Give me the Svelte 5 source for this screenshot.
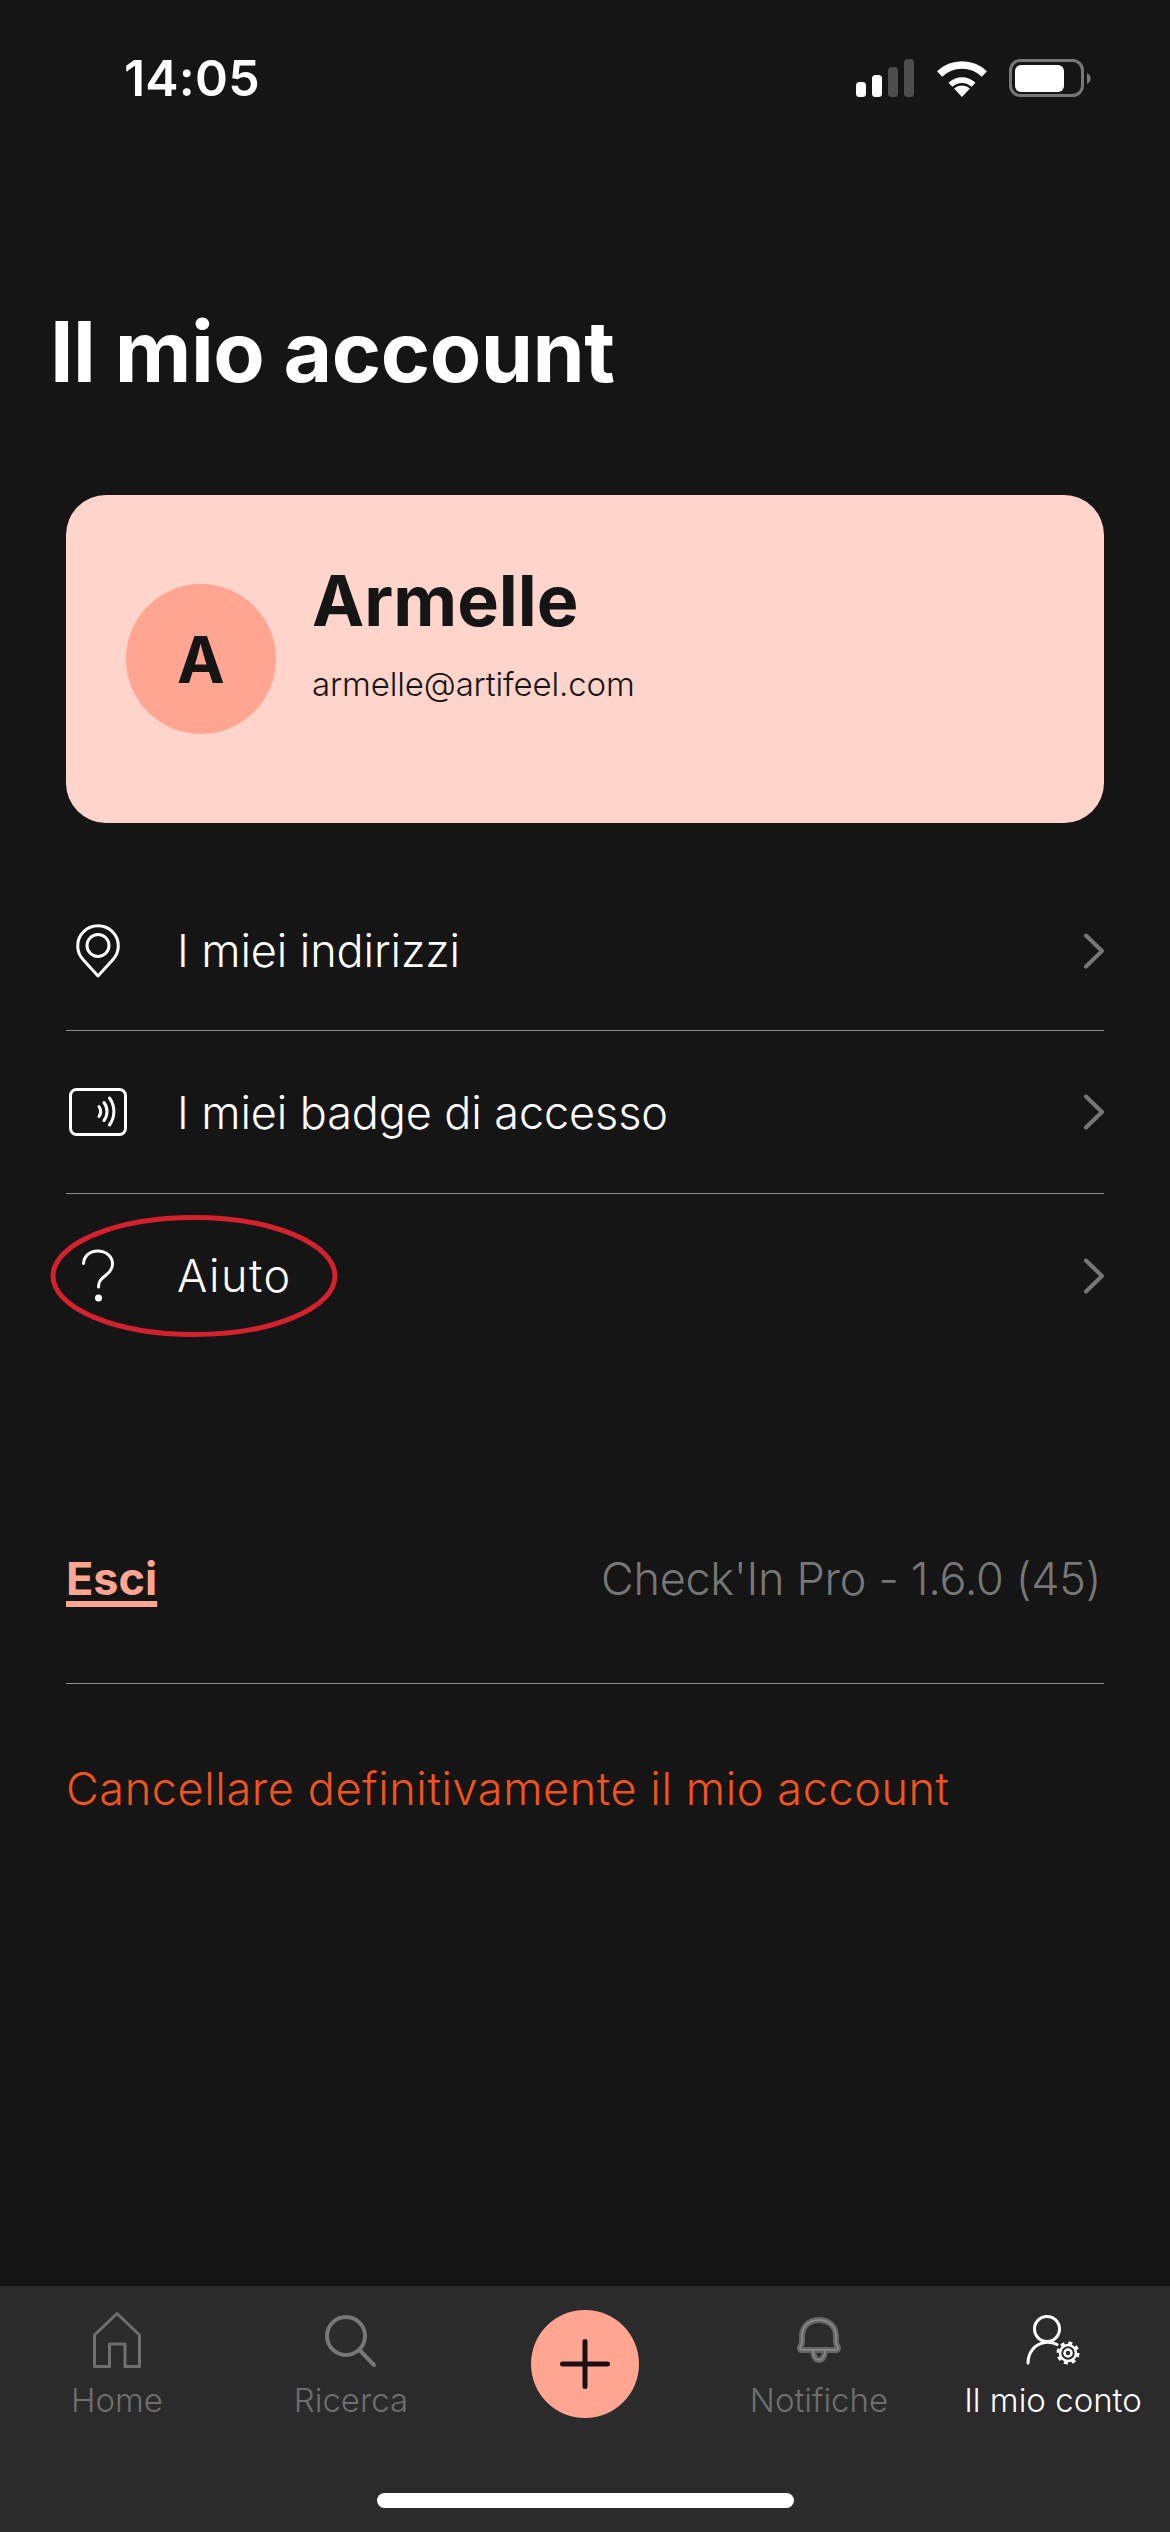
<script>
	const rows = [
		{ label: 'I miei indirizzi', icon: 'pin' },
		{ label: 'I miei badge di accesso', icon: 'badge' },
		{ label: 'Aiuto', icon: 'help' }
	];
	const bell =
		'M25 9C14 9 8 16 8 26V31C8 34 6 35 6 37C6 38.500 7 39 8 39H42C43 39 44 38.500 44 37C44 35 42 34 42 31V26C42 16 36 9 25 9ZM19 39C19 46 22 49 25 49C28 49 31 46 31 39';
</script>

<div class="page">
	<div class="status">
		<span class="time">14:05</span>
		<div class="status-icons">
			<svg class="signal" width="58" height="38" viewBox="0 0 58 38">
				<rect x="0" y="23" width="10" height="15" rx="3.500" fill="#fff" />
				<rect x="16" y="16" width="10" height="22" rx="3.500" fill="#fff" />
				<rect x="32" y="8" width="10" height="30" rx="3.500" fill="#4d4d4d" />
				<rect x="48" y="0" width="10" height="38" rx="3.500" fill="#4d4d4d" />
			</svg>
			<svg class="wifi" width="50" height="38" viewBox="0 0 50 38">
				<path d="M25 38 17 29.500a12 12 0 0 1 16 0z" fill="#fff" />
				<path d="M11.500 23.800a19.500 19.500 0 0 1 27 0L34.600 27.800a14 14 0 0 0-19.200 0z" fill="#fff" />
				<path d="M0 12.300a36 36 0 0 1 50 0L44.800 17.800a28.500 28.500 0 0 0-39.600 0z" fill="#fff" />
			</svg>
			<svg class="battery" width="82" height="38" viewBox="0 0 82 38">
				<rect x="1.500" y="1.500" width="72" height="35" rx="10" fill="none" stroke="#777" stroke-width="3" />
				<rect x="6" y="6" width="49" height="27" rx="6" fill="#fff" />
				<path d="M78 14a6 6 0 0 1 0 11z" fill="#777" />
			</svg>
		</div>
	</div>

	<h1 class="title">Il mio account</h1>

	<div class="card">
		<div class="avatar">A</div>
		<div class="who">
			<div class="name">Armelle</div>
			<div class="email">armelle@artifeel.com</div>
		</div>
	</div>

	<div class="rows">
		{#each rows as row}
			<div class="row">
				<span class="row-icon">
					{#if row.icon === 'pin'}
						<svg width="44" height="54" viewBox="0 0 44 54" fill="none" stroke="#fff" stroke-width="3">
							<path d="M22 52 7 35.500C3.500 31.500 1.700 27 1.700 22a20.300 20.300 0 0 1 40.600 0c0 5-1.800 9.500-5.300 13.500z" stroke-linejoin="round" />
							<circle cx="22" cy="21.500" r="11" />
						</svg>
					{:else if row.icon === 'badge'}
						<svg width="58" height="48" viewBox="0 0 58 48" fill="none" stroke="#fff" stroke-width="3">
							<rect x="1.500" y="1.500" width="55" height="45" rx="6" />
							<g stroke-linecap="round">
								<path d="M30 18.500a9 9 0 0 1 0 10" />
								<path d="M35 14.500a15 15 0 0 1 0 18" />
								<path d="M40.500 10a23 23 0 0 1 0 27" />
							</g>
						</svg>
					{:else}
						<svg width="34" height="54" viewBox="0 0 34 54" fill="none" stroke="#fff" stroke-width="3">
							<path d="M2.500 14.500C3 7 9 2 16.500 2 25 2 31.500 7.500 31.500 15c0 5.500-3 8.500-7 11.500-4.500 3.500-7 6-7 11.500" stroke-linecap="round" />
							<circle cx="17.500" cy="49" r="3.500" fill="#fff" stroke="none" />
						</svg>
					{/if}
				</span>
				<span class="row-label">{row.label}</span>
				<svg class="chevron" width="22" height="36" viewBox="0 0 22 36" fill="none" stroke="#777" stroke-width="4">
					<path d="M4 2.500 20 18 4 33.500" stroke-linecap="round" stroke-linejoin="round" />
				</svg>
				{#if row.icon === 'help'}
					<svg class="circled" width="288" height="122" viewBox="0 0 288 122" fill="none">
						<ellipse cx="144" cy="61" rx="141" ry="58.500" stroke="#d3222e" stroke-width="5" />
					</svg>
				{/if}
			</div>
		{/each}
	</div>

	<div class="foot">
		<a class="logout" href="#esci">Esci</a>
		<span class="version">Check'In Pro - 1.6.0 (45)</span>
	</div>

	<div class="delete">Cancellare definitivamente il mio account</div>

	<nav class="tabbar">
		<div class="tabs">
			<div class="tab">
				<svg width="50" height="58" viewBox="0 0 50 58" fill="none" stroke="#6f6f6f" stroke-width="3">
					<path d="M2.500 55.500V24L25 2.500 47.500 24v31.500H33V33H17.500v22.500z" stroke-linejoin="round" />
				</svg>
				<span>Home</span>
			</div>
			<div class="tab">
				<svg width="58" height="58" viewBox="0 0 58 58" fill="none" stroke="#777" stroke-width="4">
					<circle cx="24" cy="25" r="19" />
					<path d="M37.500 39 52 54" stroke-linecap="round" />
				</svg>
				<span>Ricerca</span>
			</div>
			<div class="tab">
				<button class="add" aria-label="Aggiungi">
					<svg width="50" height="50" viewBox="0 0 50 50" stroke="#1a1212" stroke-width="5" stroke-linecap="round">
						<path d="M25 2.500v45M2.500 25h45" />
					</svg>
				</button>
			</div>
			<div class="tab">
				<svg width="50" height="58" viewBox="0 0 50 58" fill="none" stroke-linejoin="round">
					<path d={bell} stroke="#666" stroke-width="6" />
					<path d={bell} stroke="#8d8d8d" stroke-width="1.500" />
				</svg>
				<span>Notifiche</span>
			</div>
			<div class="tab active">
				<svg width="58" height="58" viewBox="0 0 58 58" fill="none" stroke="#fff" stroke-width="3">
					<circle cx="23" cy="18" r="12.500" />
					<path d="M4 52C4 41 11 33 21 31.500C26 31 30 32 33 33.500" stroke-linecap="round" />
					<circle cx="44" cy="42" r="8" fill="#2b2b2b" stroke-width="2.500" />
					<circle cx="44" cy="42" r="3.500" stroke-width="2.500" />
					<circle cx="44" cy="42" r="10" stroke-width="3" stroke-dasharray="3.930 3.930" />
				</svg>
				<span>Il mio conto</span>
			</div>
		</div>
		<div class="home-bar"></div>
	</nav>
</div>

<style>
	:global(body) {
		margin: 0;
		background: #151515;
	}

	.page {
		display: flex;
		flex-direction: column;
		width: 1170px;
		height: 2532px;
		background: #151515;
		color: #fff;
		font-family: Inter, "Noto Sans", sans-serif;
		overflow: hidden;
	}

	.status {
		display: flex;
		justify-content: space-between;
		align-items: center;
		height: 156px;
		padding: 0 79px 0 124px;
	}

	.time {
		font-size: 50px;
		font-weight: 600;
		line-height: 60px;
		letter-spacing: 0.2px;
	}

	.status-icons {
		display: flex;
		align-items: flex-end;
		gap: 23px;
	}

	.status-icons .battery {
		margin-left: -1px;
	}

	.title {
		margin: 146px 0 93px 50px;
		font-size: 84px;
		font-weight: 700;
		line-height: 100px;
		letter-spacing: -0.5px;
	}

	.card {
		display: flex;
		gap: 36px;
		height: 328px;
		margin: 0 66px;
		padding: 89px 60px 0;
		box-sizing: border-box;
		background: #ffd4cb;
		border-radius: 40px;
		color: #151515;
	}

	.avatar {
		display: flex;
		justify-content: center;
		align-items: center;
		width: 150px;
		height: 150px;
		border-radius: 50%;
		background: #ffa592;
		font-size: 64px;
		font-weight: 700;
	}

	.who {
		margin-top: -28px;
	}

	.name {
		font-size: 70px;
		font-weight: 700;
		line-height: 90px;
	}

	.email {
		margin-top: 18px;
		font-size: 33px;
		font-weight: 300;
		line-height: 40px;
		letter-spacing: -0.15px;
	}

	.rows {
		margin: 45px 66px 0;
	}

	.row {
		position: relative;
		display: flex;
		align-items: center;
		height: 163px;
		border-bottom: 1px solid #8e8e8e;
		box-sizing: border-box;
	}

	.row:first-child {
		padding-top: 3px;
	}

	.row:last-child {
		border-bottom: none;
	}

	.row:last-child .row-label {
		letter-spacing: 1.5px;
	}

	.row-icon {
		display: flex;
		justify-content: center;
		align-items: center;
		width: 64px;
		margin-right: 47px;
	}

	.row-label {
		flex: 1;
		font-size: 45px;
		font-weight: 300;
		letter-spacing: -0.1px;
	}

	.circled {
		position: absolute;
		left: -16px;
		top: 21px;
	}

	.foot {
		display: flex;
		justify-content: space-between;
		align-items: center;
		height: 156px;
		margin: 171px 66px 0;
		padding-bottom: 54px;
		box-sizing: border-box;
		border-bottom: 1px solid #8e8e8e;
	}

	.logout {
		color: #ffa592;
		font-size: 45px;
		font-weight: 700;
		text-decoration: underline;
		text-decoration-thickness: 6px;
		text-underline-offset: 6px;
	}

	.version {
		color: #777;
		font-size: 45px;
		font-weight: 300;
		margin-right: 3px;
		letter-spacing: -0.3px;
	}

	.delete {
		margin: 75px 66px 0;
		color: #f2541b;
		font-size: 45px;
		font-weight: 300;
		line-height: 60px;
		letter-spacing: 0.6px;
	}

	.tabbar {
		margin-top: auto;
		height: 246px;
		background: #2b2b2b;
	}

	.tabs {
		display: grid;
		grid-template-columns: repeat(5, 234px);
		height: 207px;
	}

	.tab {
		display: flex;
		flex-direction: column;
		align-items: center;
		padding-top: 25px;
		color: #6f6f6f;
		font-size: 33px;
		font-weight: 300;
		line-height: 40px;
	}

	.tab svg {
		margin-bottom: 11px;
	}

	.tab.active {
		color: #fff;
	}

	.add {
		display: flex;
		justify-content: center;
		align-items: center;
		width: 108px;
		height: 108px;
		margin-top: -1px;
		padding: 0;
		border: none;
		border-radius: 50%;
		background: #ffa592;
	}

	.tab .add svg {
		margin: 0;
	}

	.home-bar {
		width: 417px;
		height: 15px;
		margin: 0 auto;
		border-radius: 8px;
		background: #fff;
	}
</style>
